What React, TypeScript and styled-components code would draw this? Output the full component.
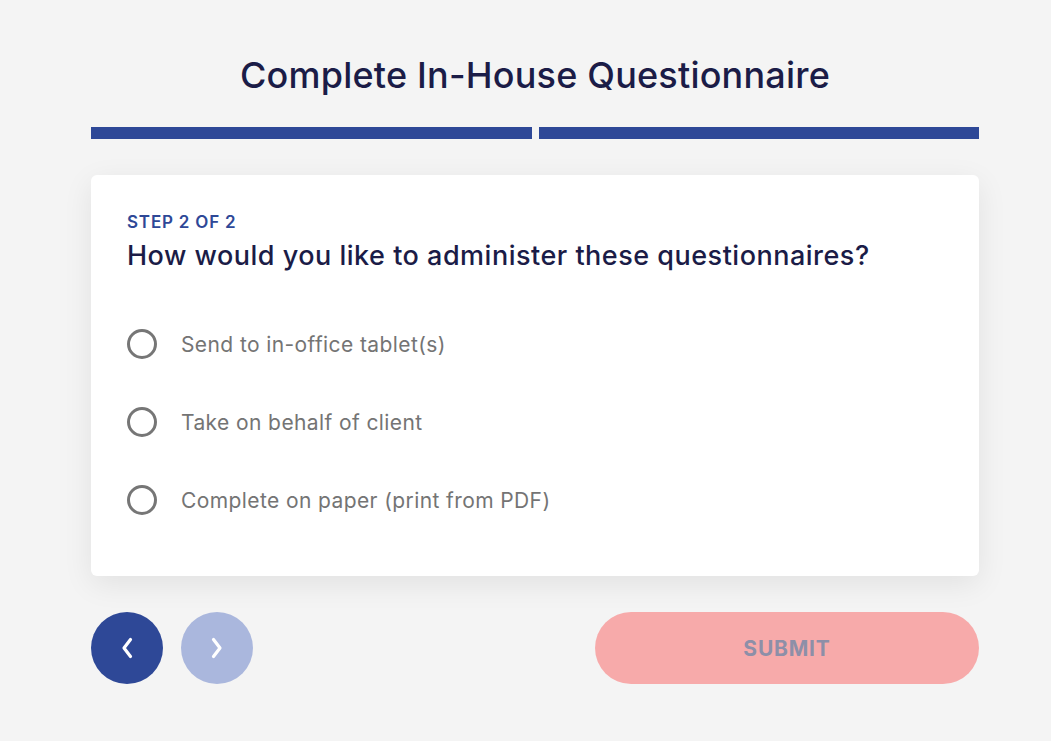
import React, { useState } from 'react';
import styled, { createGlobalStyle } from 'styled-components';

const GlobalStyle = createGlobalStyle`
  body {
    background-color: #f4f4f4;
    font-family: 'Inter', 'Lato', sans-serif;
    margin: 0;
  }
`;

const Page = styled.div`
  width: 888px;
  margin-left: 91px;
  padding-top: 52px;
`;

const Title = styled.h1`
  margin: 0;
  text-align: center;
  font-size: 36px;
  font-weight: 500;
  line-height: 46px;
  color: #1b1c47;
  letter-spacing: 0.2px;
`;

const Progress = styled.div`
  display: grid;
  grid-template-columns: 1fr 1fr;
  gap: 7px;
  margin-top: 29px;
`;

const ProgressSegment = styled.div<{ $done: boolean }>`
  height: 12px;
  background-color: ${(p) => (p.$done ? '#2e4897' : '#d6dbea')};
`;

const Card = styled.div`
  margin-top: 36px;
  background: #ffffff;
  border-radius: 6px;
  box-shadow: 0 8px 30px rgba(0, 0, 0, 0.08);
  padding: 36px 36px 44px;
  height: 401px;
  box-sizing: border-box;
`;

const StepLabel = styled.div`
  font-size: 17px;
  font-weight: 600;
  line-height: 22px;
  color: #2e4897;
  letter-spacing: 0.8px;
`;

const Question = styled.h2`
  margin: 5px 0 0;
  font-size: 27px;
  font-weight: 500;
  line-height: 35px;
  color: #1b1c47;
  letter-spacing: 0.5px;
`;

const Options = styled.div`
  display: flex;
  flex-direction: column;
  gap: 48px;
  margin-top: 56px;
`;

const Option = styled.label`
  display: flex;
  align-items: center;
  gap: 24px;
  cursor: pointer;
  height: 30px;
`;

const Radio = styled.span<{ $checked: boolean }>`
  width: 30px;
  height: 30px;
  border-radius: 50%;
  border: 3px solid ${(p) => (p.$checked ? '#2e4897' : '#767676')};
  box-sizing: border-box;
  display: flex;
  align-items: center;
  justify-content: center;

  &::after {
    content: '';
    width: 14px;
    height: 14px;
    border-radius: 50%;
    background: ${(p) => (p.$checked ? '#2e4897' : 'transparent')};
  }
`;

const OptionText = styled.span`
  font-size: 21px;
  color: #747474;
  letter-spacing: 0.4px;
`;

const Footer = styled.div`
  display: flex;
  align-items: center;
  margin-top: 36px;
`;

const NavButtons = styled.div`
  display: flex;
  gap: 18px;
  flex: 1;
`;

const CircleButton = styled.button<{ $disabled?: boolean }>`
  width: 72px;
  height: 72px;
  border-radius: 50%;
  border: none;
  padding: 0;
  display: flex;
  align-items: center;
  justify-content: center;
  background-color: ${(p) => (p.$disabled ? '#aab7dd' : '#2e4897')};
  cursor: ${(p) => (p.$disabled ? 'default' : 'pointer')};
`;

const SubmitButton = styled.button`
  width: 384px;
  height: 72px;
  border-radius: 36px;
  border: none;
  background-color: #f7aaaa;
  color: #8d8fa8;
  font-family: 'Inter', 'Lato', sans-serif;
  font-size: 21px;
  font-weight: 700;
  letter-spacing: 0.8px;
`;

const Chevron = ({ dir }: { dir: 'left' | 'right' }) => (
  <svg width="14" height="24" viewBox="0 0 14 24" fill="none">
    <path
      d={dir === 'left' ? 'M10.5 3.5 L4 12 L10.5 20.5' : 'M3.5 3.5 L10 12 L3.5 20.5'}
      stroke="#ffffff"
      strokeWidth="3.2"
      strokeLinecap="round"
      strokeLinejoin="round"
    />
  </svg>
);

const options = [
  'Send to in-office tablet(s)',
  'Take on behalf of client',
  'Complete on paper (print from PDF)',
];

const App: React.FC = () => {
  const [selected, setSelected] = useState<number | null>(null);

  return (
    <>
      <GlobalStyle />
      <Page>
        <Title>Complete In-House Questionnaire</Title>
        <Progress>
          <ProgressSegment $done />
          <ProgressSegment $done />
        </Progress>
        <Card>
          <StepLabel>STEP 2 OF 2</StepLabel>
          <Question>How would you like to administer these questionnaires?</Question>
          <Options>
            {options.map((text, i) => (
              <Option key={text} onClick={() => setSelected(i)}>
                <Radio $checked={selected === i} />
                <OptionText>{text}</OptionText>
              </Option>
            ))}
          </Options>
        </Card>
        <Footer>
          <NavButtons>
            <CircleButton aria-label="Back">
              <Chevron dir="left" />
            </CircleButton>
            <CircleButton $disabled aria-label="Next">
              <Chevron dir="right" />
            </CircleButton>
          </NavButtons>
          <SubmitButton disabled={selected === null}>SUBMIT</SubmitButton>
        </Footer>
      </Page>
    </>
  );
};

export default App;
